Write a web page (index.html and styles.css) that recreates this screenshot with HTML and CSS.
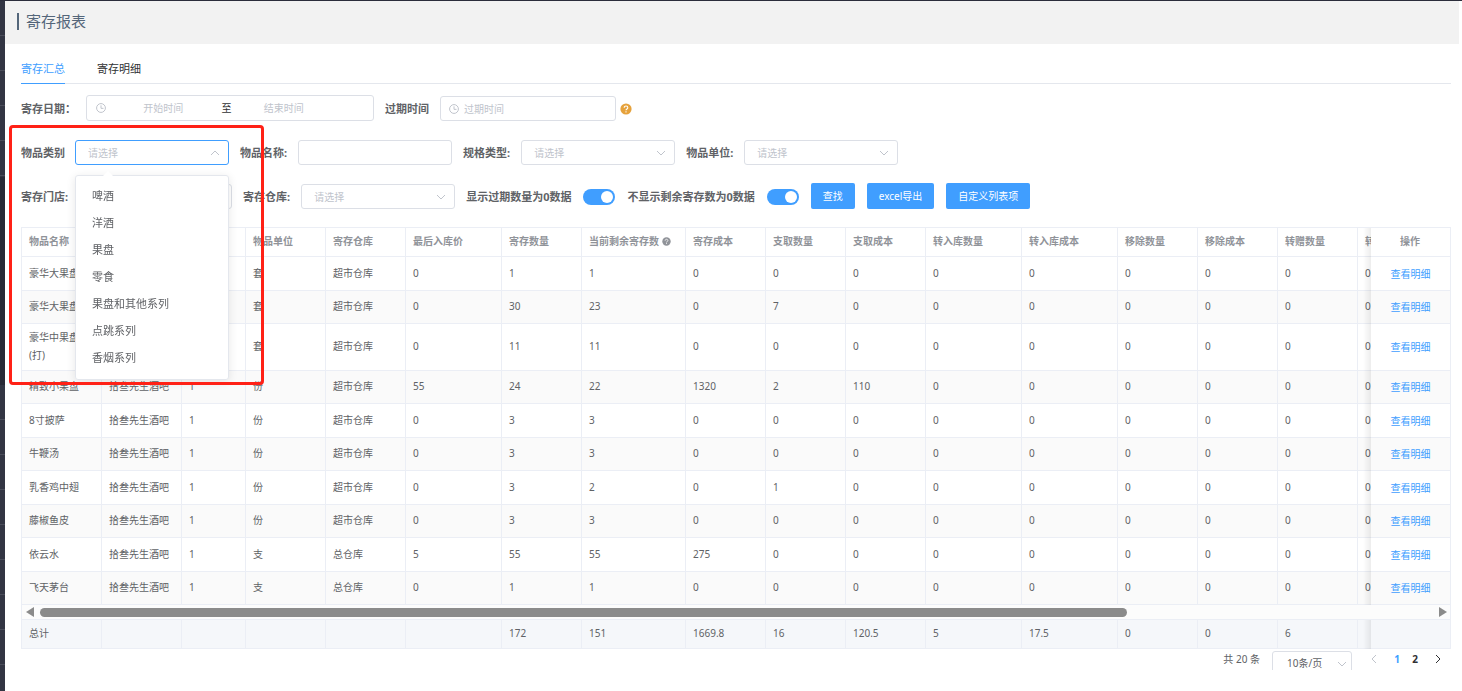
FILE: index.html
```html
<!DOCTYPE html>
<html lang="zh-CN">
<head>
<meta charset="utf-8">
<meta name="viewport" content="width=device-width, initial-scale=1">
<title>寄存报表</title>
<link rel="stylesheet" href="styles.css">
</head>
<body>
<svg class="sprite" aria-hidden="true">
  <symbol id="chevron" viewBox="0 0 10 10"><path d="M1 3l4 4 4-4" fill="none" stroke="currentColor"/></symbol>
  <symbol id="clock" viewBox="0 0 12 12"><circle cx="6" cy="6" r="5.3" fill="none" stroke="currentColor" stroke-width="1.2"/><path d="M6 2.8v3.6h3" fill="none" stroke="currentColor" stroke-width="1.2"/></symbol>
  <symbol id="question" viewBox="0 0 12 12"><circle cx="6" cy="6" r="5.6" fill="currentColor"/><path d="M4.2 4.8C4.2 2.4 7.8 2.5 7.8 4.7 7.8 6 6 6 6 7.3M6 8.2v1.2" fill="none" stroke="#fff" stroke-width="1.1"/></symbol>
</svg>
<div class="app">
  <nav class="side" aria-label="菜单">
    <div class="side-group side-first"></div>
    <div class="side-sub"></div>
    <div class="side-group side-rest"></div>
  </nav>
  <main class="main">
    <header class="head"><h1 class="title">寄存报表</h1></header>
    <div class="content">
      <div class="tabs" role="tablist">
        <button class="tab tab-active" role="tab" aria-selected="true">寄存汇总</button>
        <button class="tab" role="tab" aria-selected="false">寄存明细</button>
      </div>

      <form class="filters">
        <div class="filter-row">
          <div class="item">
            <label class="label" for="start">寄存日期：</label>
            <div class="box range">
              <svg class="clock"><use href="#clock"/></svg>
              <input class="bare center" id="start" type="text" placeholder="开始时间">
              <span class="to">至</span>
              <input class="bare center" type="text" placeholder="结束时间" aria-label="结束时间">
              <span class="range-end"></span>
            </div>
          </div>
          <div class="item">
            <label class="label" for="expire">过期时间</label>
            <div class="box date">
              <svg class="clock"><use href="#clock"/></svg>
              <input class="bare" id="expire" type="text" placeholder="过期时间">
            </div>
            <svg class="hint"><use href="#question"/></svg>
          </div>
        </div>

        <div class="filter-row">
          <div class="item item-open">
            <label class="label" for="category">物品类别</label>
            <div class="pick">
              <select class="box select select-open" id="category"><option>请选择</option></select>
              <svg class="arrow arrow-up"><use href="#chevron"/></svg>
              <ul class="menu" role="listbox">
                <li class="option" role="option">啤酒</li>
                <li class="option" role="option">洋酒</li>
                <li class="option" role="option">果盘</li>
                <li class="option" role="option">零食</li>
                <li class="option" role="option">果盘和其他系列</li>
                <li class="option" role="option">点跳系列</li>
                <li class="option" role="option">香烟系列</li>
              </ul>
            </div>
            <div class="marker"></div>
          </div>
          <div class="item">
            <label class="label" for="name">物品名称:</label>
            <input class="box text" id="name" type="text">
          </div>
          <div class="item">
            <label class="label" for="spec">规格类型:</label>
            <div class="pick">
              <select class="box select" id="spec"><option>请选择</option></select>
              <svg class="arrow"><use href="#chevron"/></svg>
            </div>
          </div>
          <div class="item">
            <label class="label" for="unit">物品单位:</label>
            <div class="pick">
              <select class="box select" id="unit"><option>请选择</option></select>
              <svg class="arrow"><use href="#chevron"/></svg>
            </div>
          </div>
        </div>

        <div class="filter-row">
          <div class="item">
            <label class="label" for="shop">寄存门店:</label>
            <div class="pick">
              <select class="box select" id="shop"><option></option></select>
            </div>
          </div>
          <div class="item">
            <label class="label" for="store">寄存仓库:</label>
            <div class="pick">
              <select class="box select" id="store"><option>请选择</option></select>
              <svg class="arrow"><use href="#chevron"/></svg>
            </div>
          </div>
          <div class="item">
            <label class="label" for="expired">显示过期数量为0数据</label>
            <input class="switch" id="expired" type="checkbox" checked>
          </div>
          <div class="item">
            <label class="label" for="remain">不显示剩余寄存数为0数据</label>
            <input class="switch" id="remain" type="checkbox" checked>
          </div>
          <div class="actions">
            <button class="btn" type="button">查找</button>
            <button class="btn" type="button">excel导出</button>
            <button class="btn" type="button">自定义列表项</button>
          </div>
        </div>
      </form>

      <div class="report">
        <div class="pane">
          <table class="grid">
            <colgroup><col class="c80"><col class="c80"><col class="c64"><col class="c80"><col class="c80"><col class="c96"><col class="c80"><col class="c104"><col class="c80"><col class="c80"><col class="c80"><col class="c96"><col class="c96"><col class="c80"><col class="c80"><col class="c80"><col class="c80"><col class="c80"></colgroup>
            <thead>
              <tr><th>物品名称</th><th></th><th></th><th>物品单位</th><th>寄存仓库</th><th>最后入库价</th><th>寄存数量</th><th>当前剩余寄存数 <svg class="tip"><use href="#question"/></svg></th><th>寄存成本</th><th>支取数量</th><th>支取成本</th><th>转入库数量</th><th>转入库成本</th><th>移除数量</th><th>移除成本</th><th>转赠数量</th><th>转</th><th class="fixed">操作</th></tr>
            </thead>
            <tbody>
              <tr><td>豪华大果盘</td><td></td><td></td><td>套</td><td>超市仓库</td><td>0</td><td>1</td><td>1</td><td>0</td><td>0</td><td>0</td><td>0</td><td>0</td><td>0</td><td>0</td><td>0</td><td>0</td><td class="fixed"><a class="link" href="#">查看明细</a></td></tr>
              <tr><td>豪华大果盘</td><td></td><td></td><td>套</td><td>超市仓库</td><td>0</td><td>30</td><td>23</td><td>0</td><td>7</td><td>0</td><td>0</td><td>0</td><td>0</td><td>0</td><td>0</td><td>0</td><td class="fixed"><a class="link" href="#">查看明细</a></td></tr>
              <tr><td>豪华中果盘(打)</td><td></td><td></td><td>套</td><td>超市仓库</td><td>0</td><td>11</td><td>11</td><td>0</td><td>0</td><td>0</td><td>0</td><td>0</td><td>0</td><td>0</td><td>0</td><td>0</td><td class="fixed"><a class="link" href="#">查看明细</a></td></tr>
              <tr><td>精致小果盘</td><td>拾叁先生酒吧</td><td>1</td><td>份</td><td>超市仓库</td><td>55</td><td>24</td><td>22</td><td>1320</td><td>2</td><td>110</td><td>0</td><td>0</td><td>0</td><td>0</td><td>0</td><td>0</td><td class="fixed"><a class="link" href="#">查看明细</a></td></tr>
              <tr><td>8寸披萨</td><td>拾叁先生酒吧</td><td>1</td><td>份</td><td>超市仓库</td><td>0</td><td>3</td><td>3</td><td>0</td><td>0</td><td>0</td><td>0</td><td>0</td><td>0</td><td>0</td><td>0</td><td>0</td><td class="fixed"><a class="link" href="#">查看明细</a></td></tr>
              <tr><td>牛鞭汤</td><td>拾叁先生酒吧</td><td>1</td><td>份</td><td>超市仓库</td><td>0</td><td>3</td><td>3</td><td>0</td><td>0</td><td>0</td><td>0</td><td>0</td><td>0</td><td>0</td><td>0</td><td>0</td><td class="fixed"><a class="link" href="#">查看明细</a></td></tr>
              <tr><td>乳香鸡中翅</td><td>拾叁先生酒吧</td><td>1</td><td>份</td><td>超市仓库</td><td>0</td><td>3</td><td>2</td><td>0</td><td>1</td><td>0</td><td>0</td><td>0</td><td>0</td><td>0</td><td>0</td><td>0</td><td class="fixed"><a class="link" href="#">查看明细</a></td></tr>
              <tr><td>藤椒鱼皮</td><td>拾叁先生酒吧</td><td>1</td><td>份</td><td>超市仓库</td><td>0</td><td>3</td><td>3</td><td>0</td><td>0</td><td>0</td><td>0</td><td>0</td><td>0</td><td>0</td><td>0</td><td>0</td><td class="fixed"><a class="link" href="#">查看明细</a></td></tr>
              <tr><td>依云水</td><td>拾叁先生酒吧</td><td>1</td><td>支</td><td>总仓库</td><td>5</td><td>55</td><td>55</td><td>275</td><td>0</td><td>0</td><td>0</td><td>0</td><td>0</td><td>0</td><td>0</td><td>0</td><td class="fixed"><a class="link" href="#">查看明细</a></td></tr>
              <tr><td>飞天茅台</td><td>拾叁先生酒吧</td><td>1</td><td>支</td><td>总仓库</td><td>0</td><td>1</td><td>1</td><td>0</td><td>0</td><td>0</td><td>0</td><td>0</td><td>0</td><td>0</td><td>0</td><td>0</td><td class="fixed"><a class="link" href="#">查看明细</a></td></tr>
            </tbody>
          </table>
        </div>
        <div class="scroll">
          <span class="scroll-left"></span>
          <div class="track"><div class="thumb"></div></div>
          <span class="scroll-right"></span>
        </div>
        <div class="pane">
          <table class="grid total">
            <colgroup><col class="c80"><col class="c80"><col class="c64"><col class="c80"><col class="c80"><col class="c96"><col class="c80"><col class="c104"><col class="c80"><col class="c80"><col class="c80"><col class="c96"><col class="c96"><col class="c80"><col class="c80"><col class="c80"><col class="c80"><col class="c80"></colgroup>
            <tbody>
              <tr><td>总计</td><td></td><td></td><td></td><td></td><td></td><td>172</td><td>151</td><td>1669.8</td><td>16</td><td>120.5</td><td>5</td><td>17.5</td><td>0</td><td>0</td><td>6</td><td></td><td class="fixed"></td></tr>
            </tbody>
          </table>
        </div>
      </div>

      <div class="pager">
        <span class="count">共 20 条</span>
        <div class="pick pick-size">
          <select class="box select size" aria-label="每页条数"><option>10条/页</option></select>
          <svg class="arrow"><use href="#chevron"/></svg>
        </div>
        <div class="pages">
          <button class="page page-off" aria-label="上一页"><svg class="step step-prev"><use href="#chevron"/></svg></button>
          <button class="page page-on">1</button>
          <button class="page">2</button>
          <button class="page" aria-label="下一页"><svg class="step step-next"><use href="#chevron"/></svg></button>
        </div>
      </div>
    </div>
  </main>
</div>
</body>
</html>
```
FILE: styles.css
```css
* { box-sizing: border-box; }

body {
  margin: 0;
  background: #fff;
  color: #606266;
  font: 10px/18px "Noto Sans", "Noto Sans CJK SC", sans-serif;
}

button, input, select { font: inherit; color: inherit; margin: 0; }
svg { display: block; flex: none; }
.sprite { position: absolute; width: 0; height: 0; }

.app {
  display: flex;
  min-height: 100vh;
  border-top: 1px solid #2b2d3b;
}

/* side menu edge */
.side { display: flex; flex-direction: column; flex: none; width: 5px; background: #323543; }
.side-group { background: repeating-linear-gradient(#323543 0 34px, #4a4d5a 34px 35px); }
.side-first { height: 176px; }
.side-sub { height: 208px; background: #282a36; }
.side-rest { flex: 1; }

.main { flex: 1; min-width: 0; padding-right: 3px; }

.head { height: 43px; padding: 12px 12px 0; background: #f2f2f2; }
.title {
  margin: 0;
  padding-left: 7px;
  border-left: 2px solid #54667a;
  color: #54667a;
  font-size: 15px;
  font-weight: 400;
  line-height: 17px;
}

.content { padding: 0 8px 0 16px; }

.tabs { display: flex; gap: 32px; border-bottom: 1px solid #e4e7ed; }
.tab {
  margin-bottom: -1px;
  padding: 17px 0 6px;
  border: 0;
  border-bottom: 1px solid transparent;
  background: none;
  color: #303133;
  font-size: 11px;
  line-height: 16px;
}
.tab-active { border-bottom-color: #409eff; color: #409eff; }

/* filters */
.filters { display: flex; flex-direction: column; gap: 18px; padding: 11px 0 18px; }
.filter-row { display: flex; align-items: flex-end; gap: 11px; min-height: 26px; }
.item { display: flex; align-items: center; gap: 11px; }
.item:first-child { gap: 10px; }
.item-open { position: relative; }
.label { font-size: 11px; font-weight: 700; line-height: 25px; white-space: nowrap; }

.box { height: 25px; border: 1px solid #dcdfe6; border-radius: 3px; background: #fff; outline: 0; }
.text { width: 154px; padding: 0 12px; }
.range { display: flex; align-items: center; width: 288px; height: 26px; padding: 0 9px; }
.range .clock { margin-right: 5px; }
.date { display: flex; align-items: center; gap: 5px; width: 176px; padding: 0 8px; }
.bare { flex: 1; min-width: 0; padding: 0; border: 0; background: none; outline: 0; }
.bare::placeholder { color: #c0c4cc; opacity: 1; }
.center { text-align: center; }
.to { width: 16px; color: #303133; text-align: right; }
.range-end { width: 28px; }
.clock { width: 10px; height: 10px; color: #c0c4cc; }
.hint { width: 12px; height: 12px; margin-left: -7px; color: #e6a23c; }

.pick { position: relative; }
.select { display: block; width: 154px; padding: 0 12px; appearance: none; color: #c0c4cc; }
.select-open { border-color: #409eff; }
.arrow { position: absolute; top: 8px; right: 9px; width: 10px; height: 10px; color: #c0c4cc; pointer-events: none; }
.arrow-up { transform: rotate(180deg); }

.menu {
  position: absolute;
  z-index: 5;
  top: 35px;
  left: 0;
  width: 100%;
  margin: 0;
  padding: 6px 0 8px;
  border: 1px solid #e4e7ed;
  border-radius: 3px;
  background: #fff;
  box-shadow: 0 2px 10px rgba(0, 0, 0, .1);
  list-style: none;
}
.menu::before {
  content: "";
  position: absolute;
  top: -5px;
  left: 27px;
  border: 5px solid transparent;
  border-top: 0;
  border-bottom-color: #fff;
}
.option { padding: 0 16px; font-size: 11px; line-height: 27px; }

.marker {
  position: absolute;
  z-index: 6;
  top: -15px;
  left: -12px;
  width: 255px;
  height: 260px;
  border: 3px solid #ff2116;
  border-radius: 4px;
  pointer-events: none;
}

.switch {
  width: 32px;
  height: 16px;
  margin: 0 1px;
  padding: 2px;
  appearance: none;
  border-radius: 8px;
  background: #dcdfe6;
}
.switch::before { content: ""; display: block; width: 12px; height: 12px; border-radius: 50%; background: #fff; }
.switch:checked { background: #409eff; }
.switch:checked::before { margin-left: auto; }

.actions { display: flex; gap: 12px; }
.btn { height: 26px; padding: 0 12px; border: 0; border-radius: 2px; background: #409eff; color: #fff; }

/* report table */
.report { border: 1px solid #ebeef5; border-width: 1px 0 0 1px; }
.pane { overflow: hidden; }
.grid { width: 100%; min-width: 1496px; table-layout: fixed; border-collapse: separate; border-spacing: 0; }
.c64 { width: 64px; }
.c80 { width: 80px; }
.c96 { width: 96px; }
.c104 { width: 104px; }
.grid th, .grid td {
  height: 33px;
  padding: 0 8px 2px 7px;
  border: 1px solid #ebeef5;
  border-width: 0 1px 1px 0;
  background: #fff;
  text-align: left;
}
.grid th { height: 29px; color: #909399; font-weight: 700; white-space: nowrap; }
.grid tr:nth-child(odd) td { height: 34px; }
.grid tr:nth-child(3) td { height: 47px; }
.grid tr:nth-child(even) td { background: #fafafa; }
.total tr:nth-child(odd) td { height: 29px; background: #f5f7fa; }
.tip { display: inline-block; width: 9px; height: 9px; vertical-align: -1px; }

.grid .fixed { position: sticky; right: 0; text-align: center; }
.grid td.fixed { padding: 0 8px; }
.fixed::before {
  content: "";
  position: absolute;
  top: 0;
  bottom: -1px;
  left: -8px;
  width: 8px;
  background: linear-gradient(to left, rgba(0, 0, 0, .07), transparent);
}
.link { color: #409eff; text-decoration: none; }

.scroll {
  display: flex;
  align-items: center;
  gap: 6px;
  height: 15px;
  padding: 0 3px 0 4px;
  border: 1px solid #ebeef5;
  border-width: 0 1px 1px 0;
  background: #fcfcfc;
}
.scroll-left, .scroll-right { border: 5px solid transparent; }
.scroll-left { border-left: 0; border-right: 8px solid #8b8b8b; }
.scroll-right { border-right: 0; border-left: 8px solid #8b8b8b; }
.track { flex: 1; }
.thumb { width: 78%; height: 9px; border-radius: 5px; background: #8b8b8b; }

/* pager: the strip is lower than the size box, which is cut at its end */
.pager { display: flex; justify-content: flex-end; height: 21px; padding: 2px 4px 0 0; overflow: hidden; line-height: 16px; }
.count { margin-right: 12px; }
.pick-size { margin-right: 13px; }
.size { width: 80px; padding: 0 14px 2px; color: #606266; }
.pick-size .arrow { right: 5px; }
.pages { display: flex; height: 16px; }
.page {
  display: flex;
  align-items: center;
  justify-content: center;
  width: 18px;
  padding: 0;
  border: 0;
  background: none;
  color: #303133;
  font-weight: 700;
}
.page:first-child { margin-right: 5px; }
.page:last-child { margin-left: 5px; }
.page-on { color: #409eff; }
.page-off { color: #c0c4cc; }
.step { width: 10px; height: 10px; }
.step-prev { transform: rotate(90deg); }
.step-next { transform: rotate(-90deg); }
```
